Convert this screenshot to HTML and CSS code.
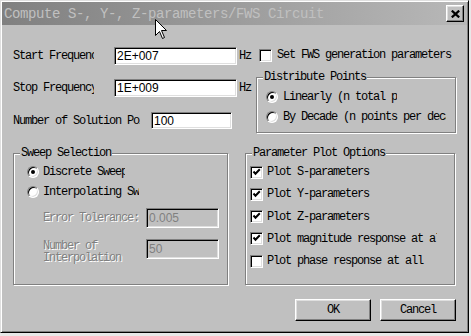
FILE: index.html
```html
<!DOCTYPE html>
<html lang="en">
<head>
    <meta charset="UTF-8">
    <title>Compute S-, Y-, Z-parameters/FWS Circuit</title>
    <link rel="stylesheet" href="styles.css">
</head>
<body>
    <div class="window">
        <div class="titlebar">
            <span class="title">Compute S-, Y-, Z-parameters/FWS Circuit</span>
            <button class="close">
                <svg width="9" height="8" viewBox="0 0 9 8"><path d="M0.8 0.6 L8.2 7.4 M8.2 0.6 L0.8 7.4" stroke="#000" stroke-width="2.2" fill="none"/></svg>
            </button>
        </div>

        <div class="content">
            <div class="top">
                <div class="freq">
                    <div class="row">
                        <span class="clip start-lbl">Start Frequency:</span>
                        <input class="field" type="text" value="2E+007">
                        <span class="unit">Hz</span>
                    </div>
                    <div class="row">
                        <span class="clip start-lbl">Stop Frequency:</span>
                        <input class="field" type="text" value="1E+009">
                        <span class="unit">Hz</span>
                    </div>
                    <div class="row points">
                        <span class="clip points-lbl">Number of Solution Points:</span>
                        <input class="field short" type="text" value="100">
                    </div>
                </div>

                <div class="options">
                    <div class="check-row">
                        <span class="check"></span>
                        <span>Set FWS generation parameters</span>
                    </div>
                    <fieldset class="group distribute">
                        <legend>Distribute Points</legend>
                        <div class="group-body">
                            <div class="opt">
                                <span class="radio on"></span>
                                <span class="clip lin-lbl">Linearly (n total points)</span>
                            </div>
                            <div class="opt">
                                <span class="radio"></span>
                                <span class="clip dec-lbl">By Decade (n points per decade)</span>
                            </div>
                        </div>
                    </fieldset>
                </div>
            </div>

            <div class="bottom">
                <fieldset class="group sweep">
                    <legend>Sweep Selection</legend>
                    <div class="group-body">
                        <div class="opt">
                            <span class="radio on"></span>
                            <span class="clip disc-lbl">Discrete Sweep</span>
                        </div>
                        <div class="opt">
                            <span class="radio"></span>
                            <span class="clip interp-lbl">Interpolating Sweep</span>
                        </div>
                        <div class="sub err">
                            <span class="clip err-lbl dim">Error Tolerance:</span>
                            <input class="field small" type="text" value="0.005" disabled>
                        </div>
                        <div class="sub num">
                            <span class="num-lbl dim">Number of Interpolation Points:</span>
                            <input class="field small" type="text" value="50" disabled>
                        </div>
                    </div>
                </fieldset>

                <fieldset class="group plot">
                    <legend>Parameter Plot Options</legend>
                    <div class="group-body">
                        <div class="opt">
                            <span class="check on"><svg width="11" height="11" viewBox="0 0 11 11"><path d="M2.5 4.5 L4.5 6.8 L8.8 2.3" stroke="#000" stroke-width="2" fill="none"/></svg></span>
                            <span>Plot S-parameters</span>
                        </div>
                        <div class="opt">
                            <span class="check on"><svg width="11" height="11" viewBox="0 0 11 11"><path d="M2.5 4.5 L4.5 6.8 L8.8 2.3" stroke="#000" stroke-width="2" fill="none"/></svg></span>
                            <span>Plot Y-parameters</span>
                        </div>
                        <div class="opt">
                            <span class="check on"><svg width="11" height="11" viewBox="0 0 11 11"><path d="M2.5 4.5 L4.5 6.8 L8.8 2.3" stroke="#000" stroke-width="2" fill="none"/></svg></span>
                            <span>Plot Z-parameters</span>
                        </div>
                        <div class="opt">
                            <span class="check on"><svg width="11" height="11" viewBox="0 0 11 11"><path d="M2.5 4.5 L4.5 6.8 L8.8 2.3" stroke="#000" stroke-width="2" fill="none"/></svg></span>
                            <span class="clip mag-lbl">Plot magnitude response at all frequencies</span>
                        </div>
                        <div class="opt">
                            <span class="check"></span>
                            <span>Plot phase response at all</span>
                        </div>
                    </div>
                </fieldset>
            </div>

            <div class="buttons">
                <button class="btn">OK</button>
                <button class="btn">Cancel</button>
            </div>
        </div>
    </div>

    <!-- mouse pointer over the title bar -->
    <svg class="cursor" width="13" height="21" viewBox="0 0 13 21">
        <path d="M0.5 0.5 L0.5 16.5 L4.5 12.5 L7.5 19.5 L9.5 18.5 L6.5 11.5 L11.5 11.5 Z" fill="#fff" stroke="#000" stroke-width="1"/>
    </svg>
</body>
</html>
```

FILE: styles.css
```css
body {
    margin: 0;
    background: #e8e8e8;
    font-family: "Liberation Mono", monospace;
    font-size: 12px;
    letter-spacing: -1.2px;
    color: #000;
}

.window {
    width: 469px;
    height: 333px;
    box-sizing: border-box;
    background: #c0c0c0;
    border: 1px solid;
    border-color: #dfdfdf #000 #000 #dfdfdf;
    box-shadow: inset 1px 1px #fff, inset -1px -1px #808080;
    padding: 1px;
}

.titlebar {
    height: 23px;
    display: flex;
    align-items: center;
    justify-content: space-between;
    background: linear-gradient(to right, #808080, #b8b8b8);
    padding: 0 3px 0 2px;
}

.title {
    color: #c0c0c0;
    font-size: 14px;
    letter-spacing: -0.4px;
    white-space: nowrap;
}

.close {
    width: 18px;
    height: 17px;
    padding: 0;
    display: flex;
    align-items: center;
    justify-content: center;
    background: #c0c0c0;
    border: 1px solid;
    border-color: #fff #000 #000 #fff;
    box-shadow: inset -1px -1px #808080, inset 1px 1px #dfdfdf;
}

.content {
    padding: 0 11px;
}

.top {
    display: grid;
    grid-template-columns: 243px 200px;
}

.freq {
    padding-top: 22px;
}

.row {
    display: flex;
    align-items: center;
    height: 18px;
}

.row + .row {
    margin-top: 14px;
}

.row.points {
    margin-top: 15px;
    height: 17px;
}

.clip {
    overflow: hidden;
    white-space: nowrap;
    flex: none;
}

.start-lbl {
    width: 81px;
    margin-right: 20px;
}

.points-lbl {
    width: 127px;
    margin-right: 11px;
}

.field {
    box-sizing: border-box;
    width: 123px;
    height: 18px;
    margin: 0;
    padding: 0 2px;
    font-family: "Liberation Sans", Arial, sans-serif;
    font-size: 12px;
    letter-spacing: 0;
    color: #000;
    background: #fff;
    border: 1px solid;
    border-color: #808080 #fff #fff #808080;
    box-shadow: inset 1px 1px #000, inset -1px -1px #dfdfdf;
    outline: none;
}

.field.short {
    width: 81px;
    height: 17px;
}

.field.small {
    width: 73px;
    height: 20px;
}

.field:disabled {
    background: #c0c0c0;
    color: #808080;
    -webkit-text-fill-color: #808080;
}

.unit {
    margin-left: 2px;
}

.options {
    padding-top: 21px;
}

.check-row {
    display: flex;
    align-items: center;
    height: 18px;
    padding-left: 3px;
    gap: 5px;
}

.check {
    box-sizing: border-box;
    width: 13px;
    height: 13px;
    flex: none;
    display: flex;
    background: #fff;
    border: 1px solid;
    border-color: #808080 #fff #fff #808080;
    box-shadow: inset 1px 1px #000, inset -1px -1px #dfdfdf;
}

.radio {
    box-sizing: border-box;
    width: 12px;
    height: 12px;
    flex: none;
    display: flex;
    align-items: center;
    justify-content: center;
    border-radius: 50%;
    background: #fff;
    border: 1px solid;
    border-color: #808080 #fff #fff #808080;
    box-shadow: inset 1px 1px #000, inset -1px -1px #dfdfdf;
}

.radio.on::after {
    content: "";
    width: 4px;
    height: 4px;
    border-radius: 50%;
    background: #000;
}

.group {
    margin: 0;
    padding: 0;
    min-width: 0;
    box-sizing: border-box;
    border: 1px solid #808080;
    box-shadow: inset 1px 1px #fff, 1px 1px #fff;
}

.group legend {
    padding: 0 1px;
    margin-left: 6px;
    line-height: 12px;
    background: #c0c0c0;
}

.opt {
    display: flex;
    align-items: center;
    height: 20px;
    gap: 4px;
}

.distribute {
    margin-top: 7px;
    height: 62px;
}

.distribute .group-body {
    padding: 4px 0 0 9px;
}

.distribute .opt {
    gap: 5px;
}

.lin-lbl {
    width: 114px;
}

.dec-lbl {
    width: 163px;
}

.bottom {
    display: flex;
    gap: 17px;
    margin-top: 14px;
}

.sweep {
    width: 215px;
    height: 138px;
}

.plot {
    width: 210px;
    height: 138px;
}

.sweep .group-body {
    padding: 3px 0 0 13px;
}

.plot .group-body {
    padding: 2px 0 0 4px;
}

.plot .opt {
    height: 22.25px;
}

.disc-lbl {
    width: 82px;
}

.interp-lbl {
    width: 96px;
}

.mag-lbl {
    width: 170px;
}

.sub {
    display: flex;
    padding-left: 16px;
}

.err {
    margin-top: 6px;
    height: 20px;
    align-items: center;
}

.err-lbl {
    width: 103px;
}

.num {
    margin-top: 11px;
    align-items: flex-start;
}

.num-lbl {
    width: 96px;
    height: 24px;
    margin: 1px 7px 0 0;
    line-height: 12px;
    overflow: hidden;
}

.dim {
    color: #808080;
    text-shadow: 1px 1px #fff;
}

.buttons {
    display: flex;
    justify-content: flex-end;
    gap: 9px;
    margin-top: 14px;
}

.btn {
    width: 76px;
    height: 22px;
    padding: 0;
    font-family: "Liberation Mono", monospace;
    font-size: 12px;
    letter-spacing: -1.2px;
    color: #000;
    background: #c0c0c0;
    border: 1px solid;
    border-color: #fff #000 #000 #fff;
    box-shadow: inset -1px -1px #808080, inset 1px 1px #dfdfdf;
}

.cursor {
    position: absolute;
    left: 155px;
    top: 19px;
}
```
